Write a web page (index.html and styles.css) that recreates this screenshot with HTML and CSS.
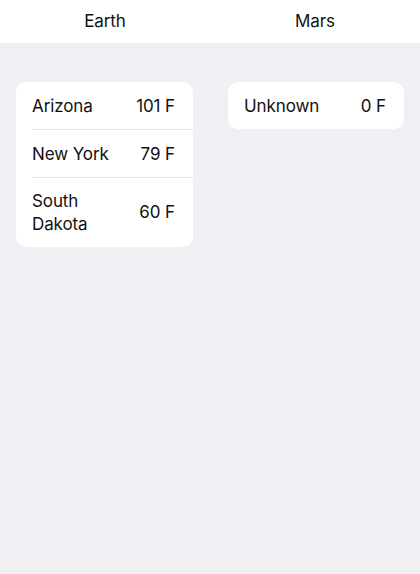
FILE: index.html
```html
<!DOCTYPE html>
<html lang="en">
<head>
<meta charset="utf-8">
<title>Planets</title>
<link rel="stylesheet" href="styles.css">
</head>
<body>
  <header class="tabs">
    <div class="tab">Earth</div>
    <div class="tab">Mars</div>
  </header>
  <main class="columns">
    <section class="column column-left">
      <div class="card">
        <div class="row">
          <span class="label">Arizona</span>
          <span class="value">101 F</span>
        </div>
        <div class="row">
          <span class="label">New York</span>
          <span class="value">79 F</span>
        </div>
        <div class="row">
          <span class="label">South Dakota</span>
          <span class="value">60 F</span>
        </div>
      </div>
    </section>
    <section class="column column-right">
      <div class="card">
        <div class="row">
          <span class="label">Unknown</span>
          <span class="value">0 F</span>
        </div>
      </div>
    </section>
  </main>
</body>
</html>
```

FILE: styles.css
```css
* {
  box-sizing: border-box;
}

html, body {
  margin: 0;
  padding: 0;
}

body {
  width: 420px;
  height: 574px;
  background: #efeff4;
  font-family: Inter, "Noto Sans", "Liberation Sans", sans-serif;
  font-size: 17px;
  color: #111;
  letter-spacing: -0.1px;
}

.tabs {
  display: grid;
  grid-template-columns: 1fr 1fr;
  height: 43px;
  background: #ffffff;
}

.tab {
  display: flex;
  align-items: center;
  justify-content: center;
  padding-bottom: 1px;
}

.columns {
  display: grid;
  grid-template-columns: 1fr 1fr;
  padding-top: 39px;
  align-items: start;
}

.column-left {
  padding: 0 17px 0 16px;
}

.column-right {
  padding: 0 16px 0 18px;
}

.card {
  background: #ffffff;
  border-radius: 10px;
  overflow: hidden;
}

.row {
  display: flex;
  align-items: center;
  margin-left: 16px;
  padding: 12.5px 18px 11.5px 0;
  line-height: 22.5px;
  border-top: 1px solid #e6e6eb;
}

.row:first-child {
  border-top: none;
  padding-top: 13px;
}

.label {
  flex: 1 1 auto;
  max-width: 90px;
}

.value {
  margin-left: auto;
  white-space: nowrap;
  text-align: right;
}
```
